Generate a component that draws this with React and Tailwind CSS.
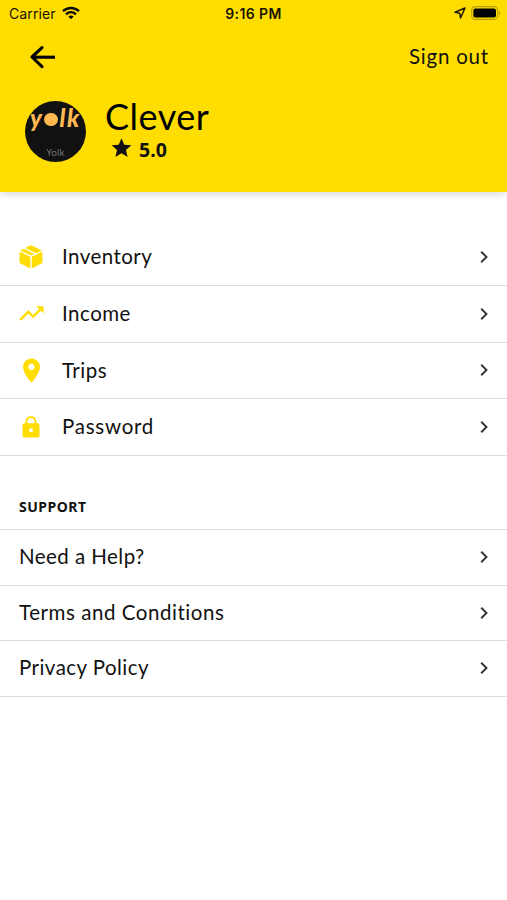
import React from 'react';
import { MdTrendingUp, MdPlace } from 'react-icons/md';
import { IoMdStar } from 'react-icons/io';

function WifiIcon() {
  return (
    <svg width="18" height="14" viewBox="0 0 18 14" fill="none" stroke="#0c0b00" strokeWidth="2.5">
      <path d="M1 5.2C5.6.8 12.4.8 17 5.2" />
      <path d="M4 8.3c2.9-2.7 7.1-2.7 10 0" />
      <path d="M6.3 10.5c1.6-1.4 3.8-1.4 5.4 0L9 13.3z" fill="#0c0b00" stroke="none" />
    </svg>
  );
}

function LocationIcon() {
  return (
    <svg width="12" height="12" viewBox="0 0 12 12" fill="none" stroke="#1d1a00" strokeWidth="1.5" strokeLinejoin="round">
      <path d="M11 1 1 5.3l4.7.9.9 4.8z" />
    </svg>
  );
}

function BatteryIcon() {
  return (
    <svg width="30" height="14" viewBox="0 0 30 14">
      <rect x="0.7" y="0.7" width="26" height="12.6" rx="3.6" fill="none" stroke="#b8a000" strokeWidth="1.2" />
      <rect x="2.4" y="2.4" width="22.6" height="9.2" rx="2" fill="#000" />
      <path d="M28 4.8c1.8.7 1.8 3.7 0 4.4z" fill="#b8a000" />
    </svg>
  );
}

function BackIcon() {
  return (
    <svg width="26" height="24" viewBox="0 0 26 24" fill="none" stroke="#000" strokeWidth="3.1" strokeLinecap="round" strokeLinejoin="round">
      <path d="M13 2.6 3 12l10 9.6" />
      <path d="M4 12.2h22" strokeLinecap="butt" />
    </svg>
  );
}

function BoxIcon() {
  return (
    <svg width="24" height="24" viewBox="0 0 24 24" fill="#ffdd00">
      <path d="M11.3 11.7v11.8L1.5 18.6Q.6 18.1.6 17.1V6.6z" />
      <path d="M12.7 11.7v11.8l9.8-4.9q.9-.5.9-1.5V6.6z" />
      <path d="M1.2 5.5 5 3.7l10.4 5.2L12 10.6z" />
      <path d="m6.2 3.1 4.9-2.5q.9-.4 1.8 0l9.9 4.9-5.9 2.8z" />
      <path d="m5.6 3.4 10.6 5.3" fill="none" stroke="#fff" strokeWidth=".7" />
    </svg>
  );
}

function LockIcon() {
  return (
    <svg width="24" height="24" viewBox="0 0 24 24">
      <path d="M7.5 9.5V6.6a4.5 4.5 0 0 1 9 0v2.9" fill="none" stroke="#ffdd00" strokeWidth="2" />
      <rect x="3.5" y="8.2" width="17" height="14.4" rx="1.8" fill="#ffdd00" />
      <circle cx="12" cy="15.3" r="2" fill="#fff" />
    </svg>
  );
}

function ChevronIcon() {
  return (
    <svg className="shrink-0" width="10" height="14" viewBox="0 0 10 14" fill="none" stroke="#333336" strokeWidth="1.9">
      <path d="m2.2 1.8 5.3 5.2-5.3 5.2" />
    </svg>
  );
}

const menuItems = [
  { name: 'Inventory', icon: <BoxIcon />, tracking: 'tracking-[0.45px]' },
  { name: 'Income', icon: <MdTrendingUp size={29} className="shrink-0" />, tracking: 'tracking-[0.5px]' },
  { name: 'Trips', icon: <MdPlace size={29} className="shrink-0" />, tracking: 'tracking-[0.5px]' },
  { name: 'Password', icon: <LockIcon />, tracking: 'tracking-[0.75px]' },
];

const supportItems = [
  { name: 'Need a Help?', tracking: 'tracking-[0.45px]' },
  { name: 'Terms and Conditions', tracking: 'tracking-[0.55px]' },
  { name: 'Privacy Policy', tracking: 'tracking-[0.45px]' },
];

export default function App() {
  return (
    <div className="h-[900px] w-[507px] overflow-hidden bg-white font-['Lato',sans-serif] text-[#111]">
      {/* Header */}
      <header className="h-[192px] bg-[#ffdd00] shadow-[0_2px_8px_rgba(0,0,0,0.16)]">
        <div className="grid h-7 grid-cols-3 items-center pl-[8px] pr-[6px] font-['Inter',sans-serif] text-[#171400]">
          <div className="flex items-center gap-[6px] pb-[2px] pl-px">
            <span className="text-[14px] tracking-[0.1px]">Carrier</span>
            <WifiIcon />
          </div>
          <span className="whitespace-nowrap pb-[2px] pr-[2px] text-center text-[14px] font-semibold tracking-[0.4px]">9:16 PM</span>
          <div className="flex items-center justify-end gap-[5px] pb-[2px]">
            <LocationIcon />
            <BatteryIcon />
          </div>
        </div>

        <div className="flex h-[58px] items-center justify-between pl-[29px] pr-[18px]">
          <button>
            <BackIcon />
          </button>
          <button className="pb-px text-[20.5px] tracking-[0.8px]">Sign out</button>
        </div>

        {/* Profile */}
        <div className="flex items-start pl-[25px] pt-[15px]">
          <div className="flex h-[61px] w-[61px] flex-col items-center overflow-hidden rounded-full bg-[#111]">
            <span className="mt-[4px] flex h-[26px] items-center text-[24px] font-black italic tracking-[1.6px] text-[#ffb950]">
              y
              <span className="mr-[2px] mt-[2px] h-[13px] w-[14px] rounded-full bg-[#ffb950]"></span>
              lk
            </span>
            <span className="mt-[16px] font-['Noto_Sans',sans-serif] text-[9.5px] leading-[12px] text-[#777]">Yolk</span>
          </div>
          <div className="ml-[19px]">
            <h1 className="-mt-[2px] text-[36px] leading-[34px] tracking-[0.5px] text-black">Clever</h1>
            <div className="ml-[4px] flex h-[32px] items-center gap-[5px]">
              <IoMdStar size={25} className="-mt-[4px]" />
              <span className="pt-px font-['Noto_Sans',sans-serif] text-[19.5px] font-bold leading-none">5.0</span>
            </div>
          </div>
        </div>
      </header>

      {/* Account */}
      <nav className="pt-[37px]">
        {menuItems.map((item) => (
          <a key={item.name} className="flex h-[56.8px] items-center border-b border-[#dedede] pl-[19px] pr-[18px]">
            <span className="flex w-[24px] justify-center text-[#ffdd00]">{item.icon}</span>
            <span className={`ml-[19px] flex-1 pb-px text-[20.5px] ${item.tracking}`}>{item.name}</span>
            <ChevronIcon />
          </a>
        ))}
      </nav>

      {/* Support */}
      <h2 className="flex h-[74px] items-end border-b border-[#dedede] pb-[12px] pl-[19px] font-['Noto_Sans',sans-serif] text-[14px] font-bold tracking-[0.5px]">
        SUPPORT
      </h2>
      <nav>
        {supportItems.map((item) => (
          <a key={item.name} className="flex h-[55.5px] items-center border-b border-[#dedede] pl-[19px] pr-[18px]">
            <span className={`flex-1 pb-[2px] text-[20.5px] ${item.tracking}`}>{item.name}</span>
            <ChevronIcon />
          </a>
        ))}
      </nav>
    </div>
  );
}
